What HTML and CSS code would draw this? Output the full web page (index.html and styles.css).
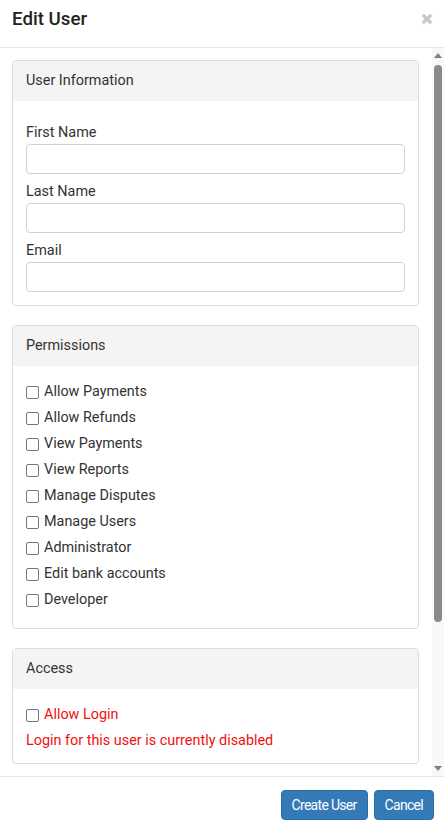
FILE: index.html
```html
<!DOCTYPE html>
<html lang="en">
<head>
<meta charset="utf-8">
<title>Edit User</title>
<link rel="stylesheet" href="styles.css">
</head>
<body>
<div class="modal">
  <div class="modal-header">
    <h4 class="modal-title">Edit User</h4>
    <button class="close" type="button" aria-label="Close">
      <svg width="12" height="12" viewBox="0 0 12 12"><path d="M1.8 1.8L10.2 10.2M10.2 1.8L1.8 10.2" stroke="#c6c6c6" stroke-width="3.2" stroke-linecap="butt"/></svg>
    </button>
  </div>
  <div class="modal-body">
    <div class="scroll-content">
      <div class="panel">
        <div class="panel-heading">User Information</div>
        <div class="panel-body form-body">
          <div class="form-group">
            <label class="field-label">First Name</label>
            <input class="form-control" type="text">
          </div>
          <div class="form-group">
            <label class="field-label">Last Name</label>
            <input class="form-control" type="text">
          </div>
          <div class="form-group">
            <label class="field-label">Email</label>
            <input class="form-control" type="email">
          </div>
        </div>
      </div>
      <div class="panel">
        <div class="panel-heading">Permissions</div>
        <div class="panel-body check-body">
          <label class="check-row"><input type="checkbox" class="check">Allow Payments</label>
          <label class="check-row"><input type="checkbox" class="check">Allow Refunds</label>
          <label class="check-row"><input type="checkbox" class="check">View Payments</label>
          <label class="check-row"><input type="checkbox" class="check">View Reports</label>
          <label class="check-row"><input type="checkbox" class="check">Manage Disputes</label>
          <label class="check-row"><input type="checkbox" class="check">Manage Users</label>
          <label class="check-row"><input type="checkbox" class="check">Administrator</label>
          <label class="check-row"><input type="checkbox" class="check">Edit bank accounts</label>
          <label class="check-row"><input type="checkbox" class="check">Developer</label>
        </div>
      </div>
      <div class="panel">
        <div class="panel-heading">Access</div>
        <div class="panel-body access-body">
          <label class="check-row danger"><input type="checkbox" class="check">Allow Login</label>
          <div class="danger-note">Login for this user is currently disabled</div>
        </div>
      </div>
    </div>
    <div class="scrollbar" aria-hidden="true">
      <div class="sb-btn"><svg width="12" height="14" viewBox="0 0 12 14"><path d="M2 10h8L6 5z" fill="#7f7f7f"/></svg></div>
      <div class="sb-thumb"></div>
      <div class="sb-track"></div>
      <div class="sb-btn"><svg width="12" height="14" viewBox="0 0 12 14"><path d="M2 4h8L6 9z" fill="#7f7f7f"/></svg></div>
    </div>
  </div>
  <div class="modal-footer">
    <button class="btn" type="button">Create User</button>
    <button class="btn" type="button">Cancel</button>
  </div>
</div>
</body>
</html>
```
FILE: styles.css
```css
* { box-sizing: border-box; }
html, body { margin: 0; padding: 0; background: #fff; }
body {
  font-family: Roboto, "Liberation Sans", Arial, sans-serif;
  font-size: 14.4px;
  line-height: 20px;
  color: #333;
}
.modal {
  width: 444px;
  height: 826px;
  display: flex;
  flex-direction: column;
  overflow: hidden;
}
.modal-header {
  height: 48px;
  flex: none;
  border-bottom: 1px solid #e5e5e5;
  display: flex;
  align-items: flex-start;
  justify-content: space-between;
  padding: 7px 11px 0 12px;
}
.modal-title {
  margin: 0;
  font-size: 18.7px;
  line-height: 24px;
  font-weight: 500;
  color: #222;
}
.close {
  border: 0;
  background: none;
  padding: 0;
  margin-top: 6px;
  width: 12px;
  height: 12px;
  display: flex;
  cursor: pointer;
}
.modal-body {
  height: 728px;
  flex: none;
  display: flex;
}
.scroll-content {
  flex: 1;
  min-width: 0;
  overflow: hidden;
  padding: 12px 13px 0 12px;
}
.scrollbar {
  width: 12px;
  flex: none;
  background: #f8f8f8;
  display: flex;
  flex-direction: column;
}
.sb-btn {
  height: 14px;
  flex: none;
  display: flex;
}
.sb-thumb {
  height: 557px;
  flex: none;
  margin: 3px 2px 0 2px;
  background: #8a8a8a;
  border-radius: 4px;
}
.sb-track { flex: 1; }
.panel {
  border: 1px solid #dcdcdc;
  border-radius: 4px;
  margin-bottom: 19px;
  overflow: hidden;
}
.panel-heading {
  background: #f4f4f4;
  height: 40px;
  padding: 10px 13px;
  color: #333;
}
.panel-body {
  padding: 14px 13px;
}
.form-body { padding-bottom: 13px; }
.check-body { padding-top: 16px; padding-bottom: 12px; }
.access-body { padding-top: 16px; padding-bottom: 12px; }
.form-group { margin-top: 8px; }
.field-label {
  display: block;
  margin-bottom: 1px;
}
.form-control {
  display: block;
  width: 100%;
  height: 30px;
  border: 1px solid #cdd2d8;
  border-radius: 4px;
  background: #fff;
  margin: 0;
  padding: 4px 8px;
  font: inherit;
}
.check-row {
  display: flex;
  align-items: center;
  height: 20px;
  margin-bottom: 6px;
}
.check {
  appearance: none;
  -webkit-appearance: none;
  width: 13px;
  height: 13px;
  border: 1px solid #767676;
  border-radius: 2px;
  background: #fff;
  margin: 0 5px 0 0;
  flex: none;
}
.danger { color: #f01010; }
.danger-note { color: #f01010; }
.modal-footer {
  flex: 1;
  border-top: 1px solid #e5e5e5;
  display: flex;
  justify-content: flex-end;
  align-items: flex-start;
  gap: 6px;
  padding: 13px 10px 0 0;
}
.btn {
  height: 30px;
  padding: 0 10px;
  background: #337ab7;
  border: 1px solid #2e6da4;
  border-radius: 4px;
  color: #fff;
  font-family: Roboto, "Liberation Sans", Arial, sans-serif;
  font-size: 14px;
  letter-spacing: -0.7px;
  cursor: pointer;
}
```
